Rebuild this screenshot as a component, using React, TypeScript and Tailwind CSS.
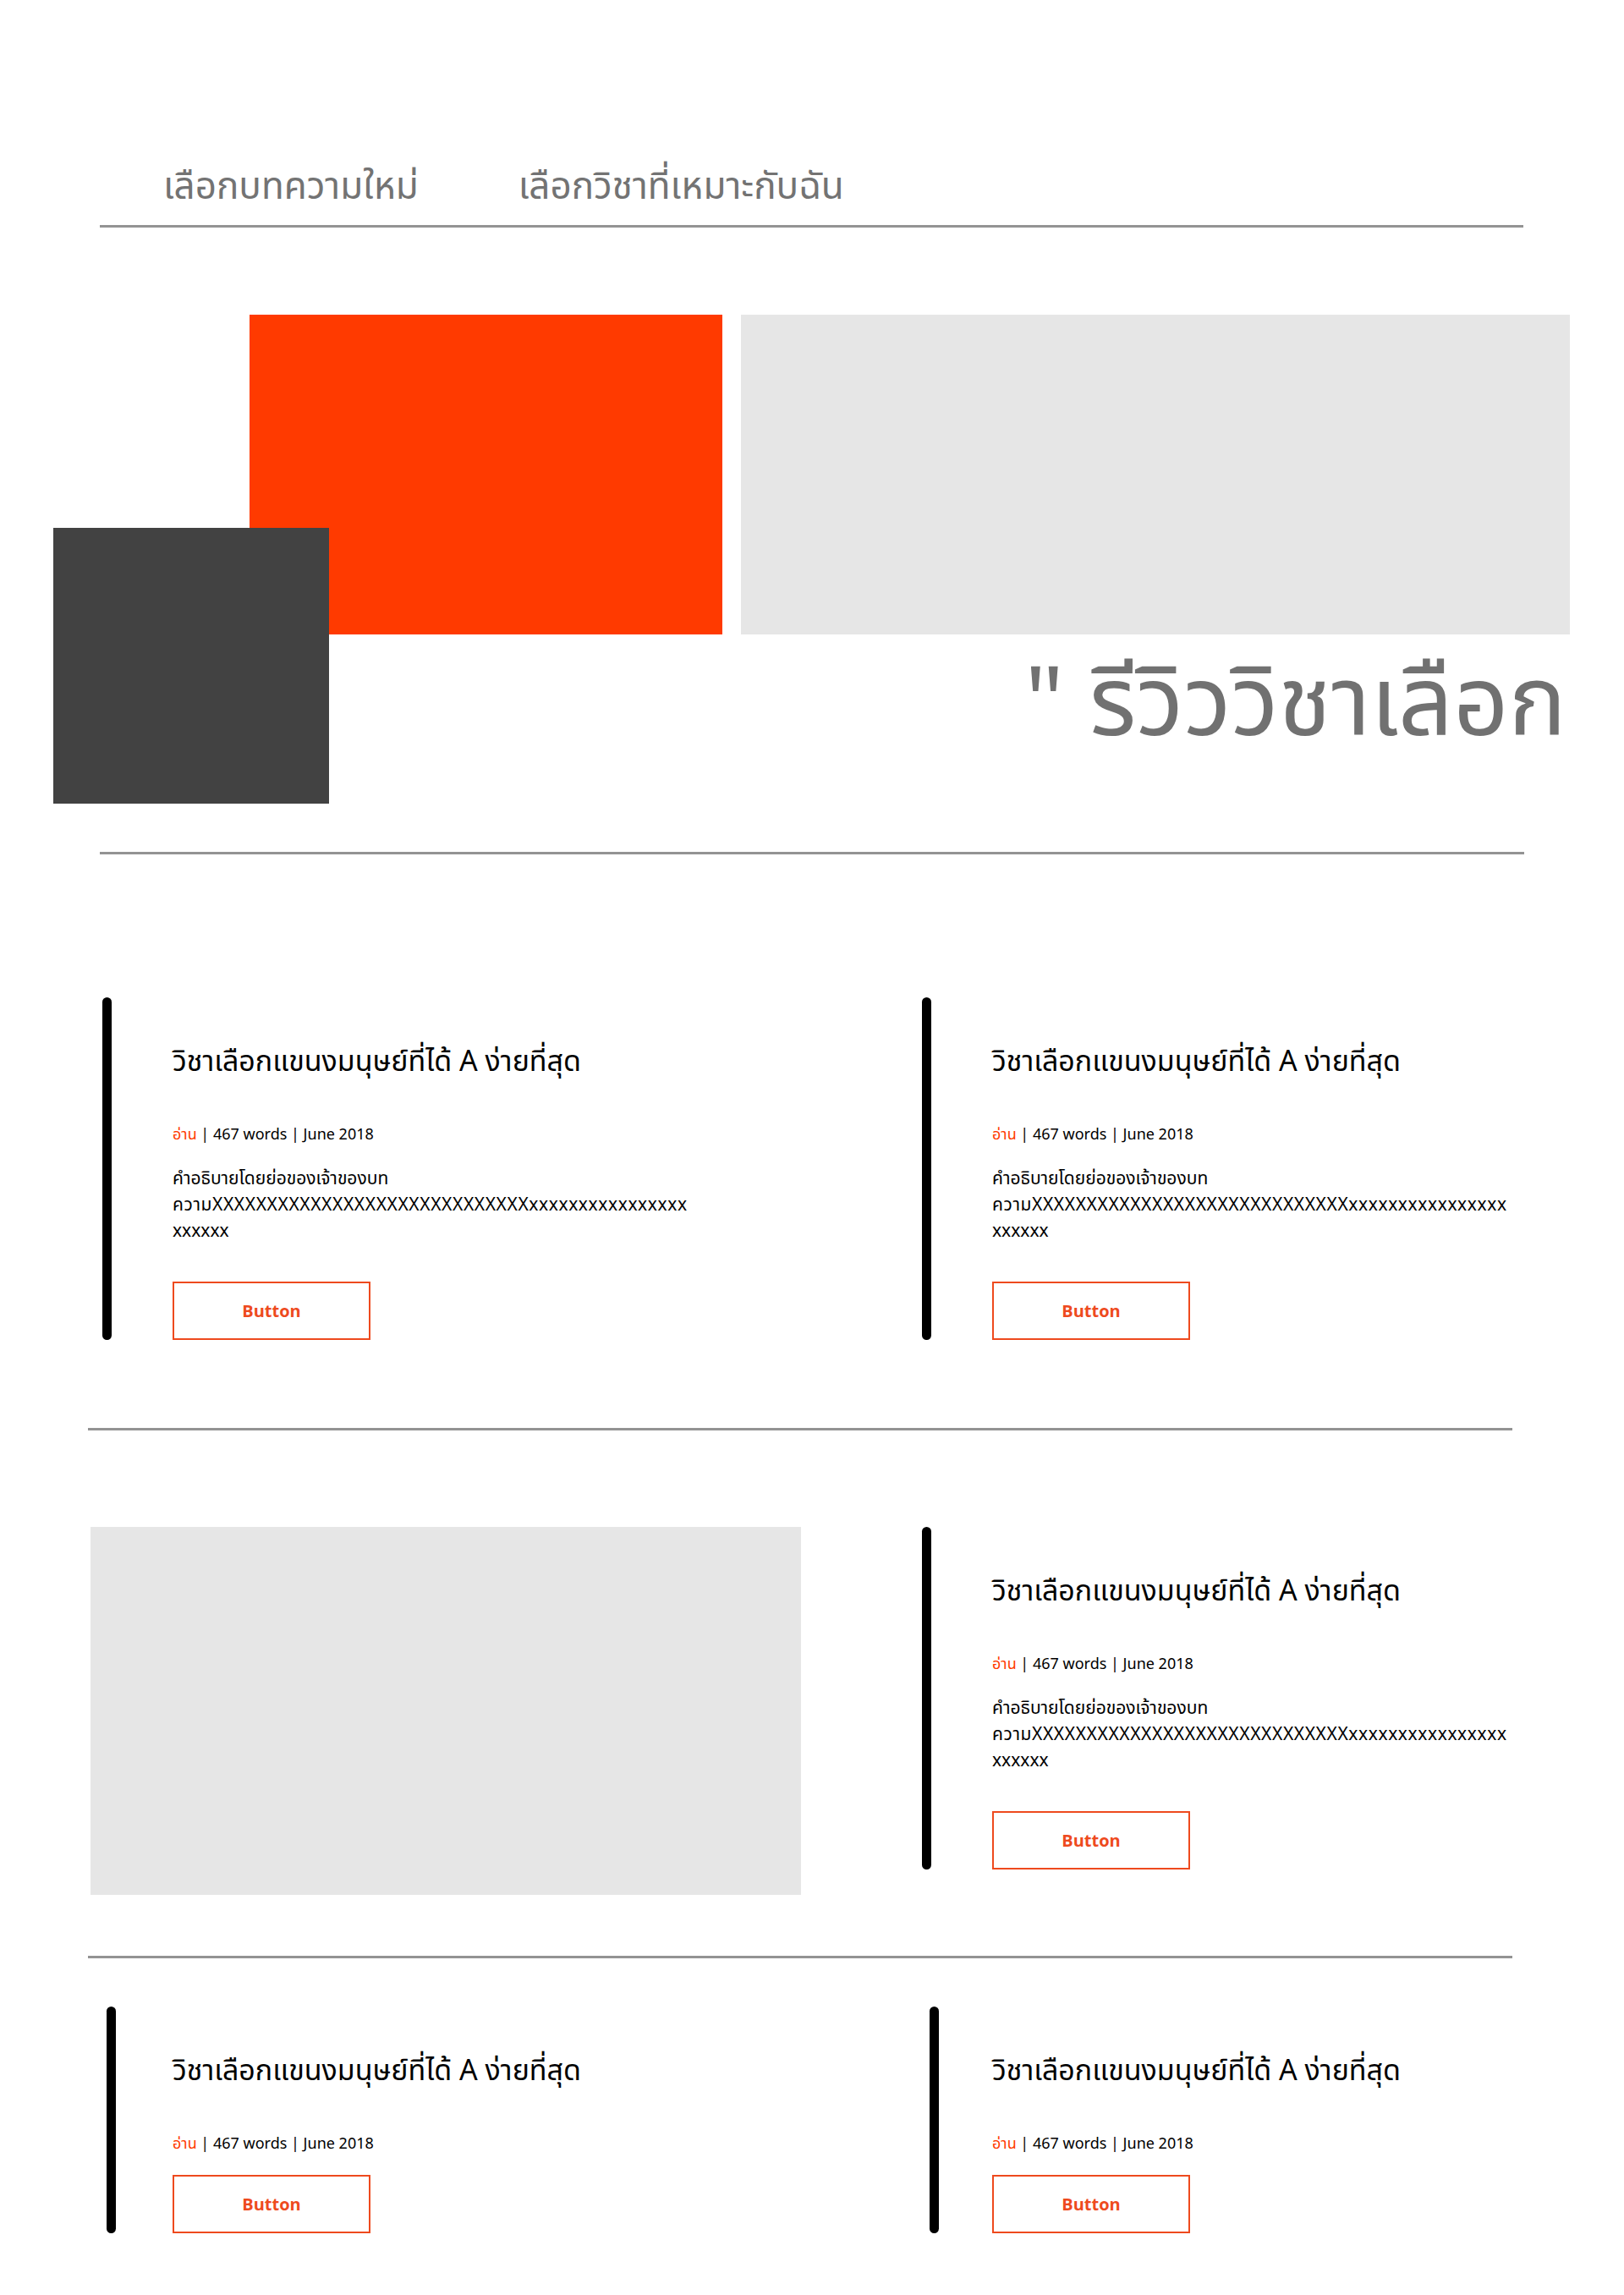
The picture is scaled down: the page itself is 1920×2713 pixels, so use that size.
const FONT = "font-['Noto_Sans_Thai','Noto_Sans','Liberation_Sans',sans-serif]";

type CardProps = {
  desc?: boolean;
  pad?: string;
};

function Card({ desc = true, pad = "pl-[72px]" }: CardProps) {
  return (
    <div className="flex">
      <div className="w-[11px] shrink-0 rounded-full bg-black" />
      <div className={`flex flex-col ${pad}`}>
        <h3 className="mt-[53px] text-[34px] leading-[48px] text-black">
          วิชาเลือกแขนงมนุษย์ที่ได้ A ง่ายที่สุด
        </h3>
        <p className="mt-[48px] text-[18px] leading-[28px] text-black">
          <span className="text-[#ff3c00]">อ่าน</span> | 467 words | June 2018
        </p>
        {desc && (
          <p className="mt-[22px] text-[21px] leading-[31px] text-black">
            คำอธิบายโดยย่อของเจ้าของบท
            <br />
            <span className="tracking-[0.6px]">ความXXXXXXXXXXXXXXXXXXXXXXXXXXXXXxxxxxxxxxxxxxxxx</span>
            <br />
            xxxxxx
          </p>
        )}
        <button
          className={`${desc ? "mt-[44px]" : "mt-[22px]"} h-[69px] w-[234px] border-2 border-[#ee4a1e] bg-white font-['Open_Sans',sans-serif] text-[20px] font-bold text-[#ee4a1e]`}
        >
          Button
        </button>
      </div>
    </div>
  );
}

export default function App() {
  return (
    <div className={`relative min-h-[2713px] w-[1920px] bg-white ${FONT}`}>
      {/* top nav */}
      <nav className="ml-[118px] w-[1683px] border-b-[3px] border-[#939393] pt-[190px] pb-[12px]">
        <div className="flex gap-[118px] pl-[75px] text-[44px] leading-[64px] text-[#737373]">
          <a>เลือกบทความใหม่</a>
          <a>เลือกวิชาที่เหมาะกับฉัน</a>
        </div>
      </nav>

      {/* hero */}
      <section className="relative pt-[103px]">
        <div className="flex gap-[22px] pl-[295px] pr-[64px]">
          <div className="h-[378px] w-[559px] bg-[#ff3a00]" />
          <div className="h-[378px] flex-1 bg-[#e6e6e6]" />
        </div>
        <h1 className="pr-[68px] pt-[16px] text-right text-[114px] leading-[136px] text-[#717171]">
          " รีวิววิชาเลือก
        </h1>
        <div className="absolute left-[63px] top-[355px] h-[326px] w-[326px] bg-[#424242]" />
      </section>

      <div className="mx-[118px] mt-[105px] h-[3px] bg-[#939393]" />

      {/* row 1 */}
      <div className="mt-[169px] grid grid-cols-[969px_1fr] pl-[121px]">
        <Card />
        <Card />
      </div>

      <div className="ml-[104px] mt-[104px] h-[3px] w-[1684px] bg-[#939393]" />

      {/* row 2 */}
      <div className="mt-[114px] grid grid-cols-[983px_1fr] pl-[107px]">
        <div className="h-[435px] w-[840px] bg-[#e6e6e6]" />
        <div className="self-start">
          <Card />
        </div>
      </div>

      <div className="ml-[104px] mt-[72px] h-[3px] w-[1684px] bg-[#939393]" />

      {/* row 3 */}
      <div className="mt-[57px] grid grid-cols-[973px_1fr] pl-[126px]">
        <Card desc={false} pad="pl-[67px]" />
        <Card desc={false} pad="pl-[63px]" />
      </div>
    </div>
  );
}
